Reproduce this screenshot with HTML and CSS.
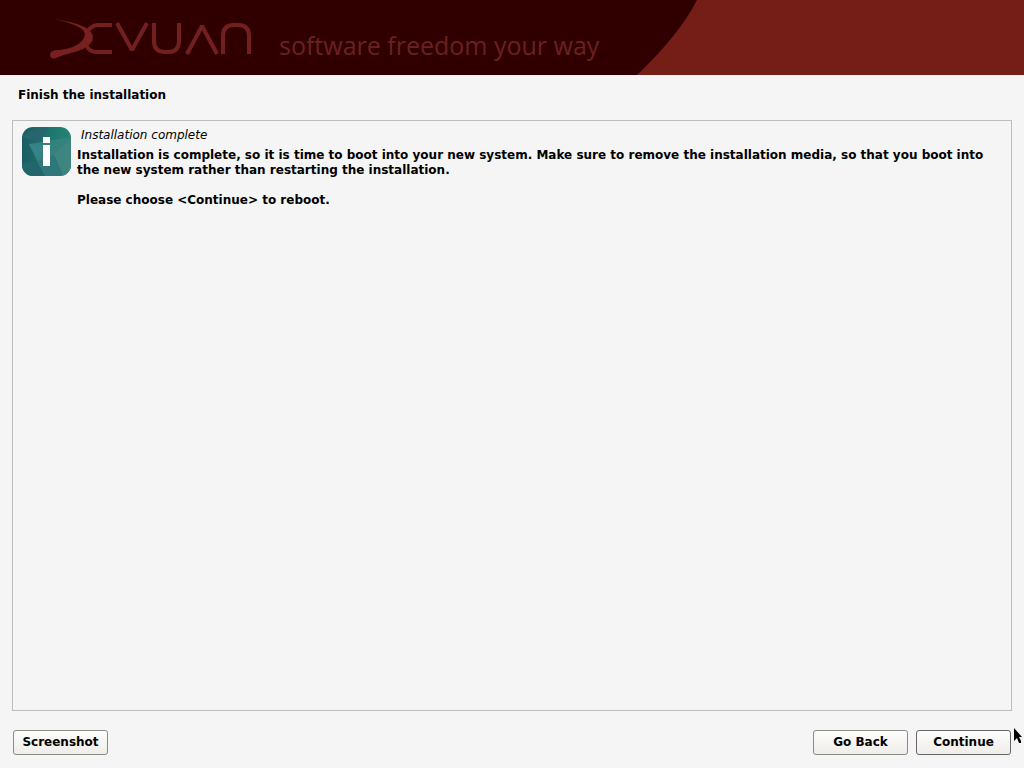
FILE: index.html
```
<!DOCTYPE html>
<html lang="en">
<head>
<meta charset="utf-8">
<title>Finish the installation</title>
<link rel="stylesheet" href="styles.css">
</head>
<body>
<header class="banner">
  <svg class="banner-curve" width="700" height="75" viewBox="0 0 700 75" aria-hidden="true">
    <path d="M0 0H697Q680 34 637 75H0Z" fill="#300000"/>
  </svg>
  <svg class="logo" width="204" height="44" viewBox="0 0 204 44" role="img" aria-label="Devuan">
    <g fill="none" stroke="#72201f" stroke-width="4">
      <path d="M62 9H48Q42 9 38 15M36 29Q39 36 47 36H62"/>
      <path d="M67 7L82 34L97 7" stroke-linejoin="bevel"/>
      <path d="M104 7V25Q104 36 115 36H118Q129 36 129 25V7"/>
      <path d="M137 38L152 10L167 38" stroke-linejoin="bevel"/>
      <path d="M173 38V20Q173 9 184 9H188Q199 9 199 20V38"/>
    </g>
    <path d="M5 3Q29 7 38 13Q46 20 41 27Q35 34 21 37Q12 39 6 42Q0 44 0 38Q1 34 9 34Q26 32 32 25Q37 19 33 14Q26 8 5 3Z" fill="#762020"/>
  </svg>
  <p class="tagline">software freedom your way</p>
</header>
<main class="page">
  <h1 class="title">Finish the installation</h1>
  <section class="panel">
    <svg class="info-icon" width="49" height="49" viewBox="0 0 49 49" role="img" aria-label="Information">
      <defs>
        <clipPath id="tile"><rect width="49" height="49" rx="11"/></clipPath>
        <linearGradient id="teal" x1="0" x2="1"><stop offset="0" stop-color="#195d65"/><stop offset="1" stop-color="#238675"/></linearGradient>
      </defs>
      <g clip-path="url(#tile)">
        <path d="M0 0H49V49H0Z" fill="url(#teal)"/>
        <path d="M15 0H26L17 15L0 10Z" fill="#27666e"/>
        <path d="M7 17L49 10V25L32 30L17 38Z" fill="#34827d"/>
        <path d="M7 17L22 20L16 31Z" fill="#37838a"/>
        <path d="M14 35L32 28L40 49H10Z" fill="#30777b"/>
        <path d="M32 27L49 12V49H41Z" fill="#3e8580"/>
        <path d="M0 37L14 33L23 49H0Z" fill="#20666a"/>
      </g>
      <path d="M21 10H28V16H21ZM21 18H28V39H21Z" fill="#fff"/>
    </svg>
    <div class="message">
      <h2 class="subtitle">Installation complete</h2>
      <p class="text">Installation is complete, so it is time to boot into your new system. Make sure to remove the installation media, so that you boot into the new system rather than restarting the installation.</p>
      <p class="text">Please choose &lt;Continue&gt; to reboot.</p>
    </div>
  </section>
  <footer class="actions">
    <button class="button" type="button">Screenshot</button>
    <button class="button button-back" type="button">Go Back</button>
    <button class="button button-default" type="button">Continue</button>
  </footer>
</main>
<svg class="pointer" width="10" height="16" viewBox="0 0 10 16" aria-hidden="true">
  <path d="M1 0V13L4 10L6 15H8V13L6 9H9Z" fill="#000"/>
</svg>
</body>
</html>
```
FILE: styles.css
```
* { box-sizing: border-box; }
body {
  margin: 0;
  min-height: 100vh;
  display: flex;
  flex-direction: column;
  background: #f5f5f5;
  color: #000;
  font: bold 12px/15px "DejaVu Sans", sans-serif;
}
.banner {
  position: relative;
  display: flex;
  gap: 25px;
  height: 75px;
  padding: 16px 0 0 50px;
  background: #751e18;
}
.banner-curve { position: absolute; left: 0; top: 0; }
.logo { position: relative; flex: none; }
.tagline {
  position: relative;
  margin: 11px 0 0;
  color: #6a2020;
  font: 400 25px/36px "Open Sans", sans-serif;
  white-space: nowrap;
}
.page {
  flex: 1;
  display: flex;
  flex-direction: column;
  padding: 13px 12px;
}
.title { margin: 0 0 17px 6px; font-size: 12px; line-height: 15px; }
.panel {
  flex: 1;
  display: flex;
  align-items: flex-start;
  gap: 6px;
  padding: 6px 9px;
  border: 1px solid #bdbdbd;
}
.info-icon { flex: none; }
.message { flex: 1; padding-top: 1px; }
.subtitle { margin: 0 0 5px 4px; font: italic 12px/15px "DejaVu Sans", sans-serif; }
.text { margin: 0 0 15px; }
.actions {
  display: flex;
  gap: 8px;
  padding: 19px 1px 0;
}
.button {
  width: 95px;
  height: 25px;
  padding: 0;
  border: 1px solid #8d8b88;
  border-radius: 3px;
  background: linear-gradient(#fdfdfc, #efede8);
  color: #000;
  font: inherit;
}
.button-back { margin-left: auto; }
.button-default { border-color: #666; }
.pointer { position: absolute; right: 1px; bottom: 24px; }
```
